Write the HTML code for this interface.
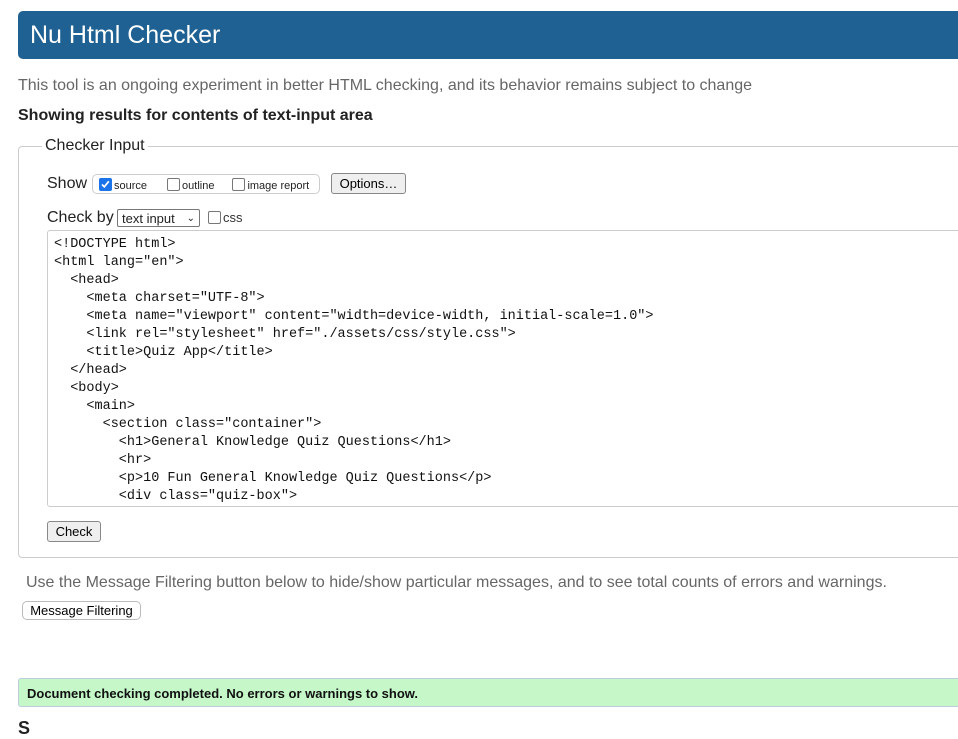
<!DOCTYPE html>
<html><head><meta charset="utf-8"><style>
*{box-sizing:border-box;margin:0;padding:0}
body{width:958px;height:724px;overflow:hidden;background:#fff;font-family:"Liberation Sans",Arial,sans-serif;position:relative;color:#222}
.a{position:absolute;white-space:nowrap}
.hdr{left:18px;top:11px;width:960px;height:48px;background:#1f6192;border-radius:5px}
.hdr span{position:absolute;left:12px;top:10px;color:#fff;font-size:25px}
.fs{left:18px;top:146px;width:960px;height:412px;border:1px solid #ccc;border-radius:4px}
.btn{position:absolute;background:#efefef;border:1px solid #888;border-radius:3px;font-size:13px;color:#000;text-align:center}
.cb{display:inline-block;width:13px;height:13px;border:1px solid #777;border-radius:2px;background:#fff;vertical-align:-2px;margin-right:2px}
.ta{left:47px;top:230px;width:930px;height:277px;border:1px solid #ccc;border-radius:3px;font-family:"Liberation Mono",monospace;font-size:13.5px;line-height:18px;padding:5px 6px;color:#111;white-space:pre;overflow:hidden}
</style></head><body>
<div class="a hdr"><span>Nu Html Checker</span></div>
<div class="a" style="left:18px;top:77px;font-size:16px;color:#666">This tool is an ongoing experiment in better HTML checking, and its behavior remains subject to change</div>
<div class="a" style="left:18px;top:107px;font-size:16px;font-weight:bold">Showing results for contents of text-input area</div>
<div class="a fs"></div>
<div class="a" style="left:42px;top:137px;font-size:16px;background:#fff;padding:0 3px">Checker Input</div>
<div class="a" style="left:47px;top:175px;font-size:16px">Show</div>
<div class="a" style="left:92px;top:174px;width:228px;height:20px;border:1px solid #ccc;border-radius:5px;font-size:11px;padding-top:3px;padding-left:6px">
<span class="cb" style="background:#1a73e8;border-color:#1a73e8;position:relative"><svg width="11" height="11" style="position:absolute;left:0;top:0" viewBox="0 0 11 11"><path d="M2 5.5l2.3 2.3 4.5-5.5" stroke="#fff" stroke-width="1.7" fill="none"/></svg></span>source<span style="display:inline-block;width:20px"></span><span class="cb"></span>outline<span style="display:inline-block;width:18px"></span><span class="cb"></span>image report</div>
<div class="btn" style="left:331px;top:173px;width:75px;height:21px;line-height:19px">Options…</div>
<div class="a" style="left:47px;top:209px;font-size:16px">Check by</div>
<div class="a" style="left:117px;top:209px;width:83px;height:18px;border:1px solid #777;border-radius:2px;font-size:13px;padding-left:4px;line-height:17px">text input <span style="position:absolute;right:4px;top:0;font-size:10px">&#8964;</span></div>
<div class="a" style="left:208px;top:210px;font-size:13px;color:#333"><span class="cb"></span>css</div>
<div class="a ta">&lt;!DOCTYPE html&gt;
&lt;html lang="en"&gt;
  &lt;head&gt;
    &lt;meta charset="UTF-8"&gt;
    &lt;meta name="viewport" content="width=device-width, initial-scale=1.0"&gt;
    &lt;link rel="stylesheet" href="./assets/css/style.css"&gt;
    &lt;title&gt;Quiz App&lt;/title&gt;
  &lt;/head&gt;
  &lt;body&gt;
    &lt;main&gt;
      &lt;section class="container"&gt;
        &lt;h1&gt;General Knowledge Quiz Questions&lt;/h1&gt;
        &lt;hr&gt;
        &lt;p&gt;10 Fun General Knowledge Quiz Questions&lt;/p&gt;
        &lt;div class="quiz-box"&gt;</div>
<div class="btn" style="left:47px;top:521px;width:54px;height:21px;line-height:19px">Check</div>
<div class="a" style="left:26px;top:574px;font-size:16px;color:#666">Use the Message Filtering button below to hide/show particular messages, and to see total counts of errors and warnings.</div>
<div class="btn" style="left:22px;top:601px;width:119px;height:19px;line-height:17px;border-color:#bbb;border-radius:5px;background:#fff">Message Filtering</div>
<div class="a" style="left:18px;top:678px;width:960px;height:29px;background:#c5f7c9;border:1px solid #bcd;border-radius:3px;font-size:13px;font-weight:bold;color:#111;padding:7px 8px">Document checking completed. No errors or warnings to show.</div>
<div class="a" style="left:18px;top:718px;font-size:18px;font-weight:bold">S</div>
</body></html>
